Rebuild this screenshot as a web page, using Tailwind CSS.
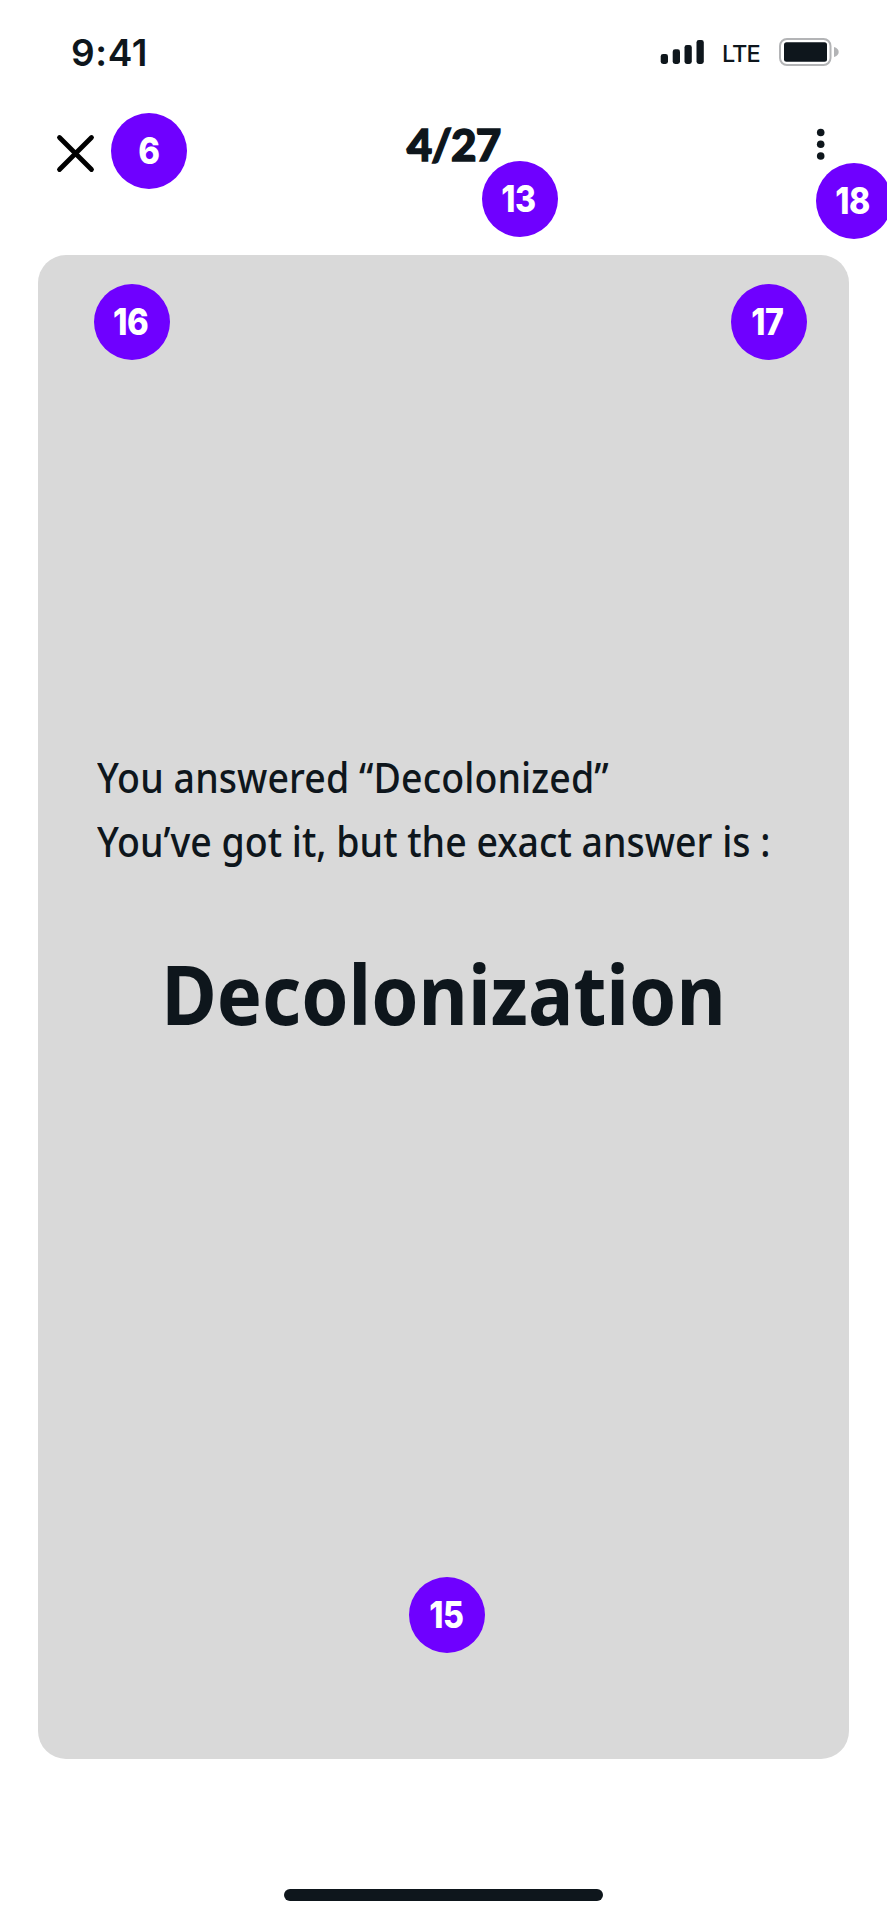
<!DOCTYPE html>
<html lang="en">
<head>
<meta charset="utf-8">
<title>Flashcard answer</title>
<script src="https://cdn.jsdelivr.net/npm/@tailwindcss/browser@4"></script>
</head>
<body class="bg-white">
<div class="relative flex h-[1920px] w-[887px] flex-col overflow-hidden bg-white text-[#0e161c]">

  <!-- Status bar -->
  <div class="flex h-[104px] shrink-0 items-center justify-between pl-[71px] pr-[47px] font-['Inter',sans-serif]">
    <span class="pt-px text-[37px] leading-none font-semibold tracking-[0.6px]">9:41</span>
    <div class="flex items-center">
      <svg class="h-6 w-[44px]" viewBox="0 0 44 24" fill="currentColor">
        <rect x="0.7" y="14" width="7.3" height="10" rx="2.4"/>
        <rect x="12.7" y="9.3" width="7.3" height="14.7" rx="2.4"/>
        <rect x="24.5" y="5" width="7.3" height="19" rx="2.4"/>
        <rect x="36.5" y="0" width="7.3" height="24" rx="2.4"/>
      </svg>
      <span class="mt-[3px] ml-[18px] w-[57px] text-[23.5px] leading-none font-medium tracking-[-1px]">LTE</span>
      <svg class="h-7 w-[61px]" viewBox="0 0 61 28">
        <rect x="1" y="1" width="50.5" height="26" rx="7" fill="none" stroke="#b3b4b6" stroke-width="2"/>
        <rect x="5" y="4.3" width="43" height="19.4" rx="2.5" fill="currentColor"/>
        <path d="M55 9c3 .8 4.700 2.600 4.700 5s-1.700 4.200-4.700 5z" fill="#b3b4b6"/>
      </svg>
    </div>
  </div>

  <!-- Header -->
  <div class="grid h-[151px] shrink-0 grid-cols-3 items-start pr-[46px] pl-[55px]">
    <svg class="mt-[29px] h-[41px] w-[41px]" viewBox="0 0 41 41" fill="none" stroke="#000" stroke-width="4.800" stroke-linecap="round"><path d="M4.500 4.500 36.500 36.500M36.500 4.500 4.500 36.500"/></svg>
    <h1 class="mt-[18px] pl-[11px] text-center font-['Lato',sans-serif] text-[44px] leading-[44px] font-black tracking-[-1px] [-webkit-text-stroke:1.4px_#0e161c]">4/27</h1>
    <svg class="mt-[20px] h-10 w-10 justify-self-end" viewBox="0 0 40 40" fill="currentColor"><circle cx="19.700" cy="8.500" r="3.800"/><circle cx="19.700" cy="20.200" r="3.800"/><circle cx="19.700" cy="32" r="3.800"/></svg>
  </div>

  <!-- Answer card -->
  <main class="mx-[38px] h-[1504px] shrink-0 rounded-[28px] bg-[#d9d9d9] pt-[491px] font-['Noto_Sans',sans-serif]">
    <p class="ml-[59px] origin-left scale-x-[0.915] text-[41px] leading-[63.7px] font-medium whitespace-nowrap"><span class="tracking-[0.1px]">You answered “Decolonized”</span><br>You’ve got it, but the exact answer is :</p>
    <p class="mt-[70px] scale-x-[0.914] text-center text-[83px] leading-[100px] font-bold">Decolonization</p>
  </main>

  <!-- Home indicator -->
  <div class="mx-auto mt-[130px] h-3 w-[319px] shrink-0 rounded-full bg-[#0e161c]"></div>

  <!-- Annotation markers -->
  <div class="font-['Inter',sans-serif] text-[36.5px] leading-none font-extrabold tracking-[-0.5px] text-white">
    <div class="absolute top-[113px] left-[111px] flex size-[76px] items-center justify-center rounded-full bg-[#6f00ff]"><span class="scale-x-[0.9]">6</span></div>
    <div class="absolute top-[160.500px] left-[482px] flex size-[76px] items-center justify-center rounded-full bg-[#6f00ff] pt-px pr-[2px]"><span class="scale-x-[0.88]">13</span></div>
    <div class="absolute top-[163px] left-[816px] flex size-[76px] items-center justify-center rounded-full bg-[#6f00ff] pt-px pr-[2px]"><span class="scale-x-[0.88]">18</span></div>
    <div class="absolute top-[283.500px] left-[94px] flex size-[76px] items-center justify-center rounded-full bg-[#6f00ff] pt-px pr-[2px]"><span class="scale-x-[0.9]">16</span></div>
    <div class="absolute top-[283.500px] left-[730.500px] flex size-[76px] items-center justify-center rounded-full bg-[#6f00ff] pt-px pr-[2px]"><span class="scale-x-[0.88]">17</span></div>
    <div class="absolute top-[1577px] left-[409px] flex size-[76px] items-center justify-center rounded-full bg-[#6f00ff] pt-px pr-[2px]"><span class="scale-x-[0.88]">15</span></div>
  </div>
</div>
</body>
</html>
